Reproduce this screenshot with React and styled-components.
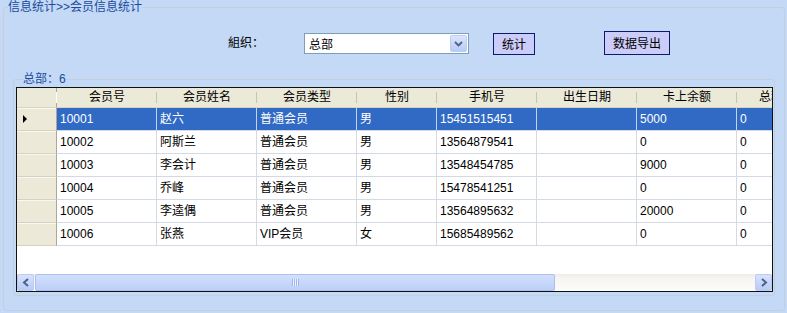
import React from "react";
import styled, { createGlobalStyle } from "styled-components";

const GlobalStyle = createGlobalStyle`
  html, body {
    margin: 0;
    padding: 0;
    background: #c3d9f5;
  }
  body {
    width: 787px;
    height: 313px;
    overflow: hidden;
    font-family: "Liberation Sans", "Noto Sans CJK SC", sans-serif;
    font-size: 12px;
    color: #000;
  }
  * { box-sizing: border-box; }
`;

const columns = [
  { key: "id", title: "会员号", width: 100 },
  { key: "name", title: "会员姓名", width: 100 },
  { key: "type", title: "会员类型", width: 100 },
  { key: "sex", title: "性别", width: 80 },
  { key: "phone", title: "手机号", width: 100 },
  { key: "birth", title: "出生日期", width: 100 },
  { key: "balance", title: "卡上余额", width: 100 },
  { key: "total", title: "总积分", width: 80 },
];

const members = [
  { id: "10001", name: "赵六", type: "普通会员", sex: "男", phone: "15451515451", birth: "", balance: "5000", total: "0" },
  { id: "10002", name: "阿斯兰", type: "普通会员", sex: "男", phone: "13564879541", birth: "", balance: "0", total: "0" },
  { id: "10003", name: "李会计", type: "普通会员", sex: "男", phone: "13548454785", birth: "", balance: "9000", total: "0" },
  { id: "10004", name: "乔峰", type: "普通会员", sex: "男", phone: "15478541251", birth: "", balance: "0", total: "0" },
  { id: "10005", name: "李逵偶", type: "普通会员", sex: "男", phone: "13564895632", birth: "", balance: "20000", total: "0" },
  { id: "10006", name: "张燕", type: "VIP会员", sex: "女", phone: "15685489562", birth: "", balance: "0", total: "0" },
];

const template = "40px " + columns.map((c) => c.width + "px").join(" ");

const App = () => {
  return (
    <>
      <GlobalStyle />
      <Panel>
        <PanelTitle>信息统计&gt;&gt;会员信息统计</PanelTitle>
        <PanelBody>
          <Toolbar>
            <Label>組织：</Label>
            <Select>
              <span>总部</span>
              <SelectButton>
                <svg width="9" height="6" viewBox="0 0 9 6">
                  <path d="M1 1 L4.5 4.5 L8 1" fill="none" stroke="#4d6185" strokeWidth="1.8" />
                </svg>
              </SelectButton>
            </Select>
            <Button $w={42} $h={22} $gap={24}>统计</Button>
            <Button $w={66} $h={24} $gap={69}>数据导出</Button>
          </Toolbar>

          <Group>
            <GroupTitle>总部：6</GroupTitle>
            <Grid>
              <Viewport>
                <Row $cols={template} $head>
                  <HeadCell $corner />
                  {columns.map((c) => (
                    <HeadCell key={c.key}>{c.title}</HeadCell>
                  ))}
                </Row>
                {members.map((m, i) => (
                  <Row key={m.id} $cols={template}>
                    <RowHeader>{i === 0 && <Pointer />}</RowHeader>
                    {columns.map((c) => (
                      <Cell key={c.key} $selected={i === 0}>
                        {m[c.key]}
                      </Cell>
                    ))}
                  </Row>
                ))}
              </Viewport>
              <ScrollBar>
                <ScrollButton>
                  <svg width="8" height="9" viewBox="0 0 8 9">
                    <path d="M6 1 L2 4.5 L6 8" fill="none" stroke="#4d6185" strokeWidth="2" />
                  </svg>
                </ScrollButton>
                <Track>
                  <Thumb>
                    <Grip />
                  </Thumb>
                </Track>
                <ScrollButton>
                  <svg width="8" height="9" viewBox="0 0 8 9">
                    <path d="M2 1 L6 4.5 L2 8" fill="none" stroke="#4d6185" strokeWidth="2" />
                  </svg>
                </ScrollButton>
              </ScrollBar>
            </Grid>
          </Group>
        </PanelBody>
      </Panel>
    </>
  );
};

export default App;

const Panel = styled.fieldset`
  margin: 0 2px 0 3px;
  padding: 0;
  height: 311px;
  min-width: 0;
  border: 1px solid #c5cedb;
  border-radius: 3px;
`;

const PanelTitle = styled.legend`
  margin-left: 4px;
  padding: 0;
  height: 14px;
  line-height: 14px;
  color: #1a4b9e;
`;

const PanelBody = styled.div`
  padding: 17px 9px 0 9px;
`;

const Toolbar = styled.div`
  display: flex;
  align-items: flex-end;
  height: 24px;
`;

const Label = styled.span`
  margin-left: 215px;
  margin-bottom: 5px;
  line-height: 14px;
`;

const Select = styled.div`
  margin-left: 40px;
  margin-bottom: 1px;
  width: 165px;
  height: 21px;
  display: flex;
  align-items: center;
  justify-content: space-between;
  padding: 1px 1px 1px 4px;
  background: #fff;
  border: 1px solid #7f9db9;
`;

const SelectButton = styled.div`
  width: 17px;
  height: 17px;
  display: flex;
  align-items: center;
  justify-content: center;
  border: 1px solid #bccdf3;
  border-radius: 2px;
  background: linear-gradient(#dbe5fd, #b7cbf6);
`;

const Button = styled.div`
  margin-left: ${(p) => p.$gap}px;
  width: ${(p) => p.$w}px;
  height: ${(p) => p.$h}px;
  display: flex;
  align-items: center;
  justify-content: center;
  padding-bottom: 2px;
  background: #ccccf8;
  border: 1px solid #0a1a6e;
`;

const Group = styled.fieldset`
  margin: 17px 0 0 0;
  padding: 0 1px 3px 2px;
  height: 224px;
  min-width: 0;
  border: 1px solid #c5cedb;
  border-radius: 3px;
`;

const GroupTitle = styled.legend`
  margin-left: 7px;
  padding: 0;
  height: 14px;
  line-height: 14px;
  color: #1a4b9e;
`;

const Grid = styled.div`
  margin-top: 1px;
  width: 757px;
  height: 205px;
  border: 1px solid #111;
  display: flex;
  flex-direction: column;
  background: #fff;
`;

const Viewport = styled.div`
  flex: 1;
  overflow: hidden;
  background: #fff;
`;

const Row = styled.div`
  display: grid;
  grid-template-columns: ${(p) => p.$cols};
  width: max-content;
  height: ${(p) => (p.$head ? 20 : 23)}px;
`;

const HeadCell = styled.div`
  position: relative;
  background: #ebe9d8;
  border-bottom: 1px solid #d8d4c3;
  border-right: ${(p) => (p.$corner ? "1px solid #aca899" : "none")};
  text-align: center;
  line-height: 19px;
  white-space: nowrap;

  &::after {
    content: "";
    position: absolute;
    right: 0;
    top: 4px;
    bottom: 4px;
    width: 1px;
    background: ${(p) => (p.$corner ? "transparent" : "#c7c5b2")};
    box-shadow: 1px 0 0 #fff;
  }
`;

const RowHeader = styled.div`
  display: flex;
  align-items: center;
  padding-left: 6px;
  background: #ece9d8;
  border-right: 1px solid #aca899;
  border-bottom: 1px solid #d6d2c2;
  box-shadow: inset 0 1px 0 #f8f7f2;
`;

const Pointer = styled.span`
  width: 0;
  height: 0;
  border-left: 4px solid #000;
  border-top: 4px solid transparent;
  border-bottom: 4px solid transparent;
`;

const Cell = styled.div`
  padding-left: 3px;
  line-height: 22px;
  white-space: nowrap;
  overflow: hidden;
  background: ${(p) => (p.$selected ? "#316ac5" : "#fff")};
  color: ${(p) => (p.$selected ? "#fff" : "#000")};
  border-right: 1px solid ${(p) => (p.$selected ? "#c4d2ec" : "#d3dae6")};
  border-bottom: 1px solid #d3dae6;
`;

const ScrollBar = styled.div`
  height: 17px;
  display: flex;
  background: linear-gradient(#eeede5, #f7f6f2 30%, #fcfcfa);
`;

const ScrollButton = styled.div`
  width: 17px;
  height: 17px;
  display: flex;
  align-items: center;
  justify-content: center;
  border: 1px solid #bccdf3;
  border-radius: 2px;
  background: linear-gradient(#d7e2fd, #b7cbf6);
`;

const Track = styled.div`
  flex: 1;
  padding-left: 1px;
`;

const Thumb = styled.div`
  width: 520px;
  height: 17px;
  display: flex;
  align-items: center;
  justify-content: center;
  border: 1px solid #a9bff0;
  border-radius: 2px;
  background: linear-gradient(#d3e0fd, #bccffa);
`;

const Grip = styled.span`
  width: 7px;
  height: 7px;
  background: repeating-linear-gradient(90deg, #9fb6ec 0 1px, #eef3fe 1px 2px);
`;
